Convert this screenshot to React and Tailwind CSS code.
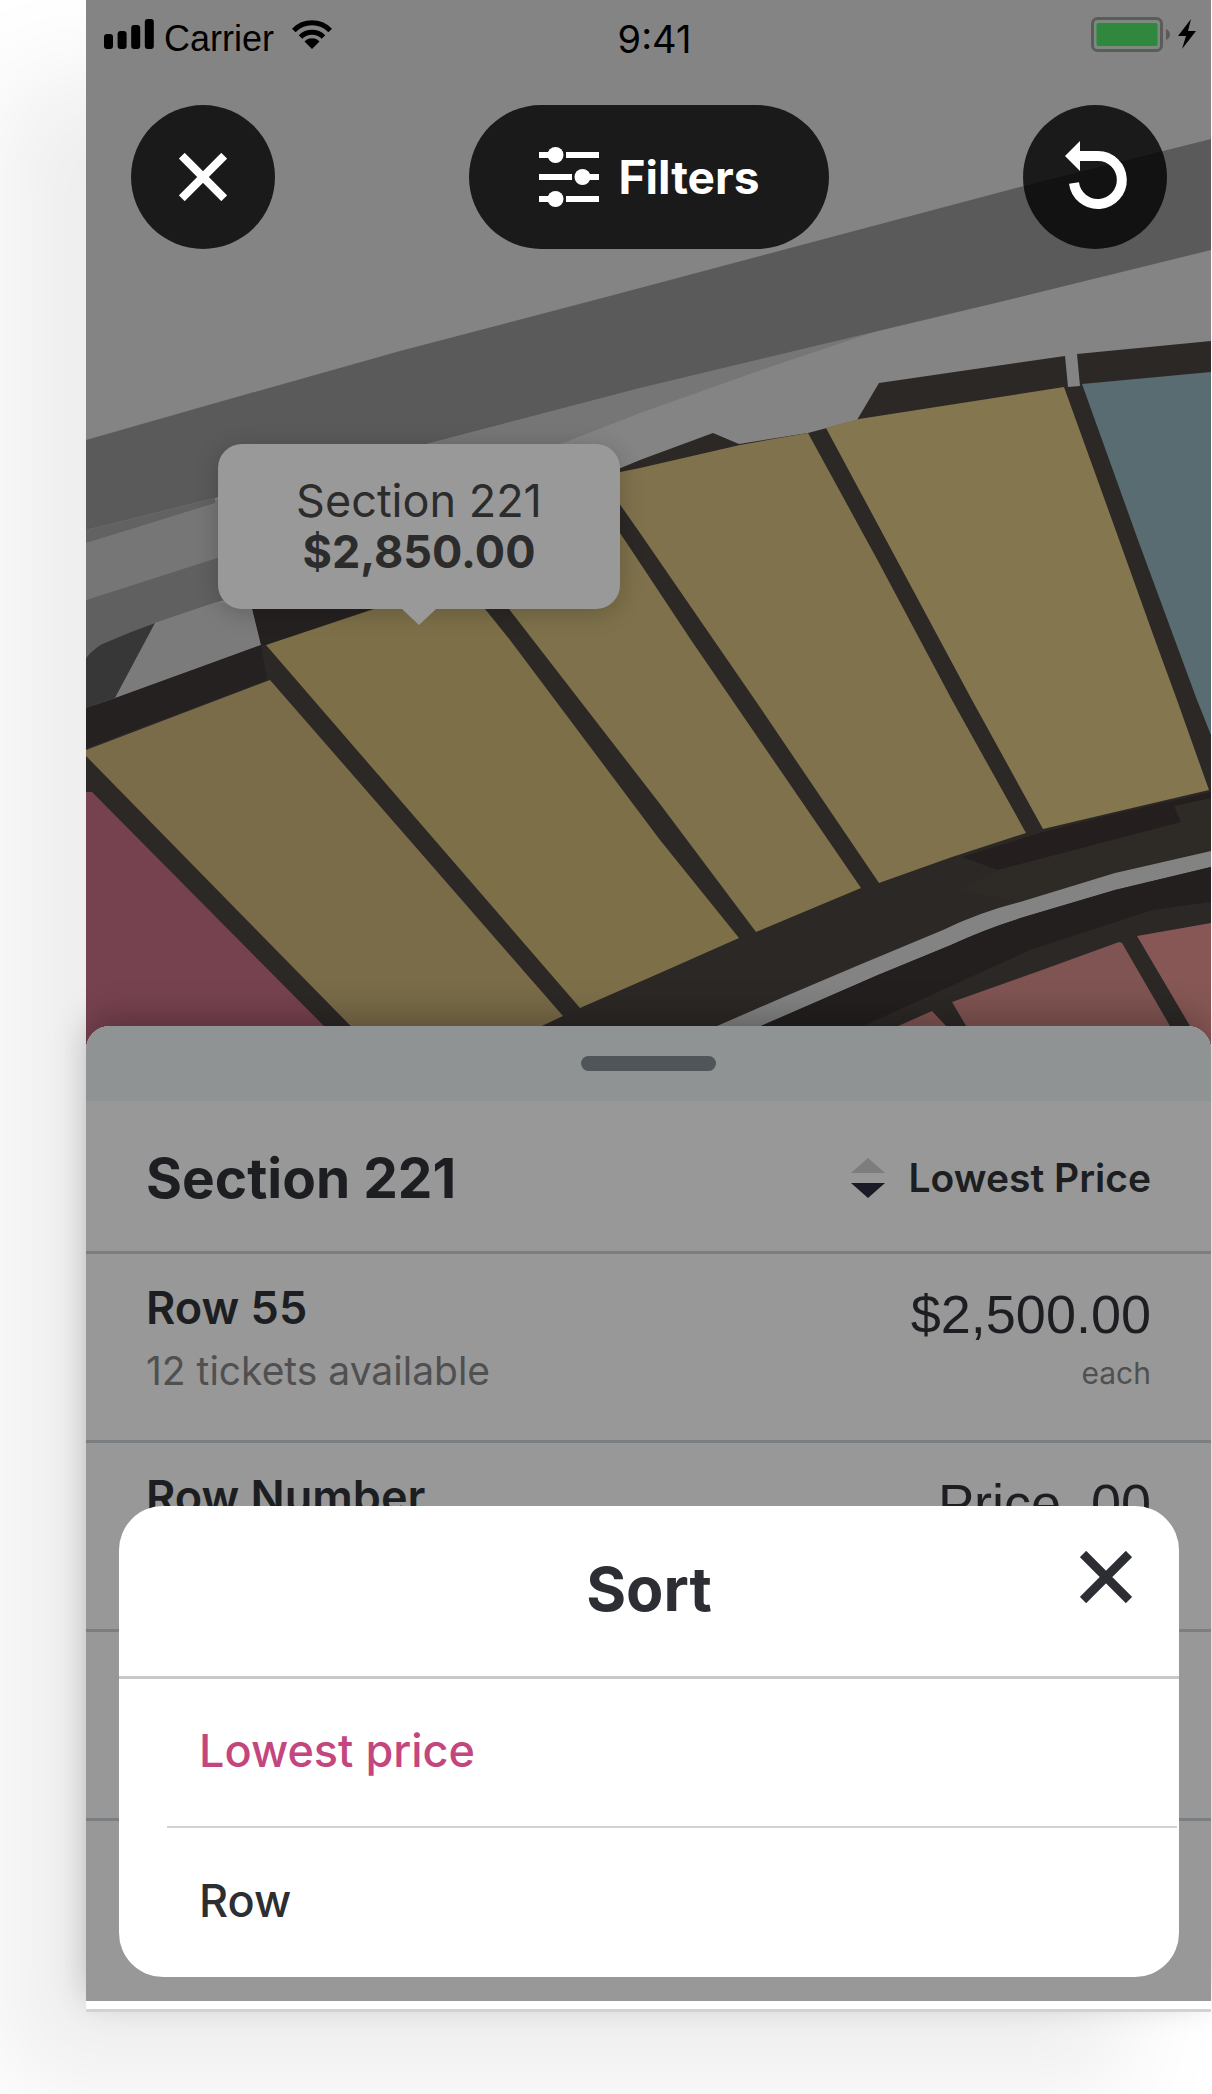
import { useState } from "react";

const tickets = [
  { id: 1, row: "Row 55", available: "12 tickets available", price: "$2,500.00" },
  { id: 2, row: "Row Number", available: "", price: "Price .00" },
  { id: 3, row: "", available: "", price: "" },
];

const sortOptions = [
  { value: "price", label: "Lowest price" },
  { value: "row", label: "Row" },
];

function SeatMap() {
  return (
    <svg viewBox="86 0 1125 1060" className="block w-full" aria-hidden="true">
      <rect x="86" width="1125" height="1060" fill="#2c2826" />

      {/* concourse */}
      <path
        d="M86 0H1211V341L1077 354L1080 386L1068 387L1065 356L879 383L857 420L808 433L739 444L713 433L640 460L400 560L252 608L261 645L115 699L86 708Z"
        fill="#848484"
      />
      <path d="M86 543L215 500L430 443L640 388L874 332L764 369L640 413L563 443L217 558L86 600Z" fill="#767676" />
      <path d="M86 440L219 402L400 351L606 297L1016 188L1211 139V250L1008 300L874 332L640 388L430 443L215 498L86 530Z" fill="#5a5a5a" />
      <path d="M86 530L215 498V503L86 543Z" fill="#626262" />
      <path d="M86 600L217 558L300 530V580L217 602L155 623L107 642L86 658Z" fill="#606060" />
      <path d="M155 623L217 602L252 608L261 645L115 699Z" fill="#7b7b7b" />
      <path d="M86 658Q96 646 107 642Q130 632 155 623L115 698L86 708Z" fill="#373737" />
      <path d="M86 708L115 698L261 645L267 680L86 748Z" fill="#252120" />
      <path d="M252 608H374L266 645H261Z" fill="#252120" />

      {/* upper seating sections */}
      <path d="M86 750L270 680L563 1016L470 1060H384L86 756Z" fill="#7a6c49" />
      <path d="M266 645L374 609L470 575L485 609L510 640L660 840L739 938L660 973L580 1008Z" fill="#7d7049" />
      <path d="M485 575L620 533L640 563L691 640L861 888L756 932L660 804L509 609Z" fill="#7e714b" />
      <path d="M600 476L640 468L740 445L808 433L878 561L952 700L1026 833L952 857L879 883L755 700L640 533L600 476Z" fill="#80724d" />
      <path d="M826 428L859 419L1064 387L1112 520L1155 640L1177 700L1209 790L1115 812L1043 829L972 700Z" fill="#84764f" />
      <path d="M1082 384L1211 372V735L1197 700L1138 540Z" fill="#596c71" />
      <path d="M86 792H92L324 1026L358 1060H86Z" fill="#77424f" />

      {/* aisle below the seats */}
      <path d="M962 857L1043 832L1115 814L1211 792V799L1174 806L1181 822L998 870Z" fill="#241f1e" />
      <path d="M998 870L1181 822L1174 806L1211 798V851L1115 873L1020 902L960 890Z" fill="#2e2a26" />
      <path d="M717 1026L786 996L859 965L943 930Q980 912 1020 902L1115 873L1211 851V867L1115 890L1024 917Q985 929 951 945L878 975L761 1026V1060H640Z" fill="#838383" />
      <path d="M761 1026L878 975L951 945Q985 929 1024 917L1115 890L1211 867V902L1152 910L1030 950L920 1000L850 1032L761 1060Z" fill="#231f1e" />

      {/* lower seating sections */}
      <path d="M896 1027L932 1011L947 1027L970 1060H820Z" fill="#805452" />
      <path d="M952 1002L1042 970L1119 942L1122 943L1170 1026L1190 1060H986Z" fill="#805452" />
      <path d="M1137 936L1211 923V1060H1208L1190 1026Z" fill="#865755" />
    </svg>
  );
}

function CloseIcon({ className, strokeWidth }) {
  return (
    <svg viewBox="0 0 52 52" className={className} aria-hidden="true">
      <path d="M3 3L49 49M49 3L3 49" fill="none" stroke="currentColor" strokeWidth={strokeWidth} />
    </svg>
  );
}

function StatusBar() {
  return (
    <div className="grid h-[68px] grid-cols-3 items-center pr-[14px] pl-[18px] text-[36px] leading-none text-black">
      <div className="flex items-center">
        <svg viewBox="0 0 50 30" className="h-[30px] w-[50px]" fill="currentColor" aria-hidden="true">
          <rect x="0" y="15" width="9" height="15" rx="3" />
          <rect x="13.6" y="12" width="9" height="18" rx="3" />
          <rect x="27.2" y="6" width="9" height="24" rx="3" />
          <rect x="40.8" y="0" width="9" height="30" rx="3" />
        </svg>
        <span className="ml-[10px] pt-[10px] font-['Liberation_Sans',Arial,sans-serif]">Carrier</span>
        <svg viewBox="0 0 40 29" className="ml-[18px] h-[29px] w-10" aria-hidden="true">
          <path d="M1.800 10.500A25.500 25.500 0 0 1 38.200 10.500" fill="none" stroke="currentColor" strokeWidth="5" />
          <path d="M8.500 17A16.500 16.500 0 0 1 31.500 17" fill="none" stroke="currentColor" strokeWidth="5" />
          <path d="M12.500 21.500A10.500 10.500 0 0 1 27.500 21.500L20 29Z" fill="currentColor" />
        </svg>
      </div>
      <span className="pt-[10px] pl-2 text-center text-[38px]">9:41</span>
      <svg viewBox="0 0 106 35" className="h-[35px] w-[106px] justify-self-end" aria-hidden="true">
        <rect x="1.500" y="1.500" width="69" height="32" rx="5" fill="#7b8a7e" stroke="#5b5b5b" strokeWidth="3" />
        <rect x="5.500" y="6" width="61" height="23" rx="2" fill="#2f883d" />
        <path d="M75 12Q79 14 79 17.500T75 23Z" fill="#5b5b5b" />
        <path d="M100 2L87 19H95L91 32L105 14H97Z" fill="currentColor" />
      </svg>
    </div>
  );
}

function MapToolbar() {
  const round = "flex h-36 items-center justify-center rounded-full bg-black/80 text-white";
  return (
    <div className="flex items-center justify-between pt-[37px] pr-11 pl-[45px]">
      <button aria-label="Close" className={`${round} w-36`}>
        <CloseIcon className="h-12 w-12" strokeWidth="9" />
      </button>
      <button className={`${round} w-[360px] gap-5 text-[46px] leading-[60px] font-bold`}>
        <svg viewBox="0 0 60 60" className="h-[60px] w-[60px]" aria-hidden="true">
          <path d="M0 8H16M27 8H60M0 30H33M44 30H60M0 52H16M27 52H60" stroke="currentColor" strokeWidth="6" />
          <circle cx="16.500" cy="8" r="8" fill="currentColor" />
          <circle cx="43.500" cy="30" r="8" fill="currentColor" />
          <circle cx="16.500" cy="52" r="8" fill="currentColor" />
        </svg>
        Filters
      </button>
      <button aria-label="Reset" className={`${round} w-36`}>
        <svg viewBox="0 0 144 144" className="h-36 w-36" aria-hidden="true">
          <path d="M54 51H75A24 24 0 1 1 51 78" fill="none" stroke="currentColor" strokeWidth="10" />
          <path d="M42 51L57 36V66Z" fill="currentColor" />
        </svg>
      </button>
    </div>
  );
}

function SectionTooltip() {
  return (
    <div className="absolute top-[444px] left-[132px] flex h-[165px] w-[402px] flex-col items-center justify-center rounded-3xl bg-[#999] pb-0.5 text-[45px] leading-[51px] text-[#2c2c2c] shadow-[0_4px_24px_rgba(0,0,0,0.2)]">
      <p>Section 221</p>
      <p className="font-bold">$2,850.00</p>
      <svg viewBox="0 0 34 16" className="absolute top-full h-4 w-[34px]" aria-hidden="true">
        <path d="M0 0H34L17 16Z" fill="#999" />
      </svg>
    </div>
  );
}

function TicketSheet({ onSort }) {
  return (
    <section className="relative -mt-[34px] rounded-t-3xl border-b-3 border-[#d0d3d3] bg-white pb-2 shadow-[0_-12px_36px_-4px_rgba(0,0,0,0.28)]">
      <div className="rounded-t-3xl bg-[#989898] text-[#1c1e21]">
        <div className="flex h-[75px] items-center justify-center rounded-t-3xl bg-[#909394]">
          <div className="h-[15px] w-[135px] rounded-full bg-[#505559]" />
        </div>
        <div className="flex h-[153px] items-center justify-between border-b-3 border-[#7c7f81] px-[60px] pt-1">
          <h1 className="text-[55px] font-bold">Section 221</h1>
          <button onClick={onSort} className="flex items-center gap-6 text-[39px] font-semibold">
            <svg viewBox="0 0 34 40" className="h-10 w-[34px]" aria-hidden="true">
              <path d="M0 15H34L17 0Z" fill="#7d7d7d" />
              <path d="M0 25H34L17 40Z" fill="#1a1b26" />
            </svg>
            Lowest Price
          </button>
        </div>
        <ul>
          {tickets.map((ticket) => (
            <li key={ticket.id} className="flex h-[189px] justify-between border-b-3 border-[#7c7f81] px-[60px] pt-6">
              <div>
                <p className="text-[45px] leading-[60px] font-semibold">{ticket.row}</p>
                <p className="text-[39px] leading-[66px] text-[#505050]">{ticket.available}</p>
              </div>
              <div className="text-right">
                <p className="font-['Liberation_Sans',Arial,sans-serif] text-[54px] leading-[72px]">{ticket.price}</p>
                {ticket.available ? <p className="text-[30px] leading-[46px] text-[#505050]">each</p> : null}
              </div>
            </li>
          ))}
        </ul>
        <div className="h-[180px]" />
      </div>
    </section>
  );
}

function SortDialog({ selected, onSelect, onClose }) {
  return (
    <div
      role="dialog"
      aria-labelledby="sort-title"
      className="absolute right-8 bottom-[35px] left-[33px] rounded-[44px] bg-white text-[#2c2e33]"
    >
      <div className="flex h-[173px] items-center justify-center border-b-3 border-[#c8c8c8] pb-0.5">
        <h2 id="sort-title" className="text-[61px] font-bold">Sort</h2>
        <button aria-label="Close sort" onClick={onClose} className="absolute top-[29px] right-[31px] p-4">
          <CloseIcon className="h-[52px] w-[52px]" strokeWidth="9" />
        </button>
      </div>
      <div className="divide-y-2 divide-[#d2d2d2] pr-0.5 pl-12">
        {sortOptions.map((option) => (
          <button
            key={option.value}
            onClick={() => onSelect(option.value)}
            className={`block h-[149px] w-full pb-1 pl-8 text-left text-[45px] font-medium ${
              selected === option.value ? "text-[#c4467f]" : "text-[#2c2e31]"
            }`}
          >
            {option.label}
          </button>
        ))}
      </div>
    </div>
  );
}

export default function App() {
  const [sort, setSort] = useState("price");
  const [sortOpen, setSortOpen] = useState(true);

  return (
    <div className="min-h-screen overflow-hidden bg-white pr-px pb-[82px] pl-[86px] font-['Inter',sans-serif]">
      <main className="relative shadow-[-83px_76px_100px_0_rgba(0,0,0,0.07)]">
        <div className="relative">
          <SeatMap />
          <div className="absolute inset-x-0 top-0">
            <StatusBar />
            <MapToolbar />
          </div>
          <SectionTooltip />
        </div>
        <TicketSheet onSort={() => setSortOpen(true)} />
        {sortOpen ? <SortDialog selected={sort} onSelect={setSort} onClose={() => setSortOpen(false)} /> : null}
      </main>
    </div>
  );
}
